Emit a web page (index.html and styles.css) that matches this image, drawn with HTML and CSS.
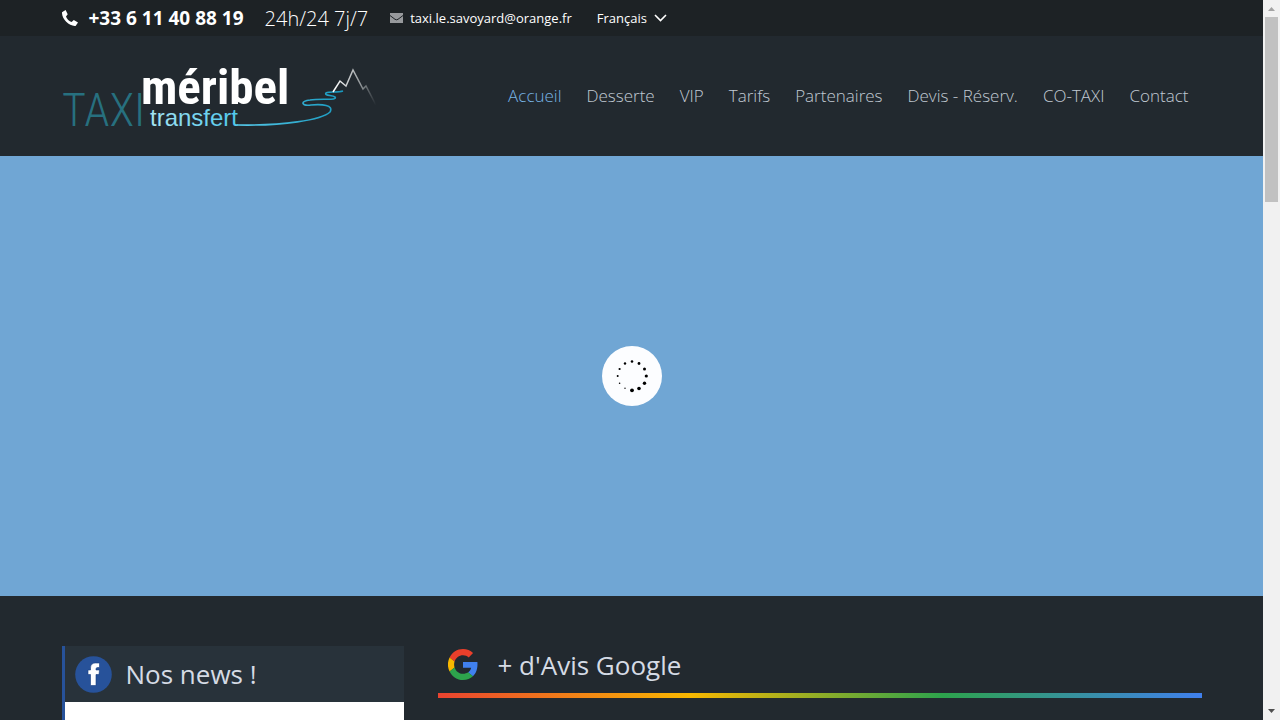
FILE: index.html
```html
<!DOCTYPE html>
<html lang="fr">
  <head>
    <meta charset="UTF-8" />
    <meta name="viewport" content="width=device-width, initial-scale=1.0" />
    <title>Taxi Méribel Transfert</title>
    <link rel="stylesheet" href="styles.css" />
  </head>
  <body>
    <div class="page">
      <div class="topbar">
        <div class="container topbar-inner">
          <a class="phone" href="tel:+33611408819">
            <svg width="16" height="16" viewBox="0 0 16 16" aria-hidden="true">
              <path fill="#fff" d="M3.6 0 0 2.2C-.2 5 1.400 9 4.200 11.800 7 14.600 10.500 16.300 13.600 15.900L16 12.600 11.800 9.900 9.600 12C7.300 11.400 4.700 8.700 4 6.400L5.700 4.300Z" />
            </svg>
            <strong>+33 6 11 40 88 19</strong>
          </a>
          <span class="hours">24h/24 7j/7</span>
          <a class="mail" href="mailto:taxi.le.savoyard@orange.fr">
            <svg width="13" height="10" viewBox="0 0 13 10" aria-hidden="true">
              <path fill="#97999c" d="M0 0H13V10H0Z" />
              <path fill="none" stroke="#1d2225" d="M0 2.500 5 6.300Q6.500 7.300 8 6.300L13 2.500" />
            </svg>
            taxi.le.savoyard@orange.fr
          </a>
          <button class="lang" type="button">
            Français
            <svg width="13" height="8" viewBox="0 0 13 8" aria-hidden="true">
              <path fill="none" stroke="#fff" stroke-width="1.600" d="M1 1 6.500 6.500 12 1" />
            </svg>
          </button>
        </div>
      </div>

      <header class="header">
        <div class="container header-inner">
          <a class="logo" href="#" aria-label="Taxi Méribel Transfert">
            <svg width="316" height="64" viewBox="0 0 316 64">
              <defs>
                <linearGradient id="transfer" x1="0" x2="1">
                  <stop offset="0" stop-color="#a5e4f2" />
                  <stop offset="1" stop-color="#4fc8ec" />
                </linearGradient>
                <linearGradient id="road" gradientUnits="userSpaceOnUse" x1="176" y1="0" x2="285" y2="0">
                  <stop offset="0" stop-color="#56c9ea" />
                  <stop offset="1" stop-color="#1697bd" />
                </linearGradient>
                <linearGradient id="peak" gradientUnits="userSpaceOnUse" x1="271" y1="36" x2="314" y2="40">
                  <stop offset="0" stop-color="#fff" />
                  <stop offset="0.600" stop-color="#92979a" />
                  <stop offset="1" stop-color="#22292f" />
                </linearGradient>
              </defs>
              <text class="logo-taxi" x="0" y="62">TAXI</text>
              <text class="logo-meribel" x="79" y="40">méribel</text>
              <text class="logo-transfert" x="88" y="62" fill="url(#transfer)">transfert</text>
              <path fill="none" stroke="url(#road)" stroke-width="1.600" d="M175 61C220 62 260 56 268 48C272 41 260 40 249 41C239 42 238 37 248 36C260 34 276 37 273 33C270 31 262 32 264 29C268 27 275 29 281 27" />
              <path fill="none" stroke="url(#peak)" stroke-width="1.500" d="M271 28 278 17 284 22 291 6 301 25 304 22 314 41" />
            </svg>
          </a>
          <nav class="menu">
            <a class="active" href="#">Accueil</a>
            <a href="#">Desserte</a>
            <a href="#">VIP</a>
            <a href="#">Tarifs</a>
            <a href="#">Partenaires</a>
            <a href="#">Devis - Réserv.</a>
            <a href="#">CO-TAXI</a>
            <a href="#">Contact</a>
          </nav>
        </div>
      </header>

      <section class="hero">
        <div class="loader">
          <svg width="60" height="60" viewBox="0 0 60 60" aria-hidden="true">
            <circle cx="30" cy="15.500" r="1.300" />
            <circle cx="37" cy="17.500" r="1.400" />
            <circle cx="42.500" cy="23" r="1.500" />
            <circle cx="44.300" cy="30" r="1.600" />
            <circle cx="42.500" cy="37.200" r="1.700" />
            <circle cx="37" cy="42.500" r="1.800" />
            <circle cx="30" cy="44.300" r="1.900" />
            <circle cx="23" cy="42.300" r="0.700" />
            <circle cx="17.600" cy="37.200" r="0.800" />
            <circle cx="15.700" cy="30" r="1" />
            <circle cx="17.600" cy="23" r="1.100" />
            <circle cx="23" cy="17.500" r="1.200" />
          </svg>
        </div>
      </section>

      <main class="container columns">
        <aside class="news">
          <h2 class="news-title">
            <svg width="37" height="37" viewBox="0 0 37 37" aria-hidden="true">
              <circle cx="18.500" cy="18.500" r="18.300" fill="#27529a" />
              <path fill="#fff" stroke="#153d80" stroke-width="0.600" d="M15.500 29.500V18.500H13V14H15.500V12C15.500 8.500 17.500 7 20.500 7H24.500V11.500H22.500Q21 11.500 21 13V14H24.500L24 18.500H21V29.500Z" />
            </svg>
            Nos news !
          </h2>
          <div class="news-body"></div>
        </aside>
        <section class="reviews">
          <h2 class="reviews-title">
            <svg width="30" height="31" viewBox="0 0 48 48" preserveAspectRatio="none" aria-hidden="true">
              <path fill="#ea3f2b" d="M24 9.500c3.540 0 6.710 1.220 9.210 3.600l6.850-6.850C35.900 2.380 30.470 0 24 0 14.620 0 6.510 5.380 2.560 13.220l7.980 6.190C12.430 13.720 17.740 9.500 24 9.500z" />
              <path fill="#4080ee" d="M47 20H24v9.020h12.940c-.580 2.960-2.260 5.480-4.780 7.180l7.730 6C45 37.500 48 30 47 20z" />
              <path fill="#f8b700" d="M10.530 28.590A14.500 14.500 0 0 1 10.530 19.410L2.560 13.220A24 24 0 0 0 2.560 34.780z" />
              <path fill="#2da34c" d="M24 48c6.480 0 11.930-2.130 15.890-5.810l-7.730-6c-2.150 1.450-4.920 2.300-8.160 2.300-6.260 0-11.570-4.220-13.470-9.910l-7.980 6.190C6.510 42.620 14.620 48 24 48z" />
            </svg>
            + d'Avis Google
          </h2>
        </section>
      </main>
    </div>

    <div class="scrollbar" aria-hidden="true">
      <svg width="17" height="17" viewBox="0 0 17 17"><path fill="#a3a3a3" d="M5 11 8.500 7 12 11Z" /></svg>
      <div class="scroll-track"><div class="scroll-thumb"></div></div>
      <svg width="17" height="17" viewBox="0 0 17 17"><path fill="#505050" d="M5 6 8.500 10 12 6Z" /></svg>
    </div>
  </body>
</html>
```

FILE: styles.css
```css
* {
  box-sizing: border-box;
}

body {
  margin: 0;
  background: #22292f;
  color: #d5dbe5;
  font-family: "Open Sans", "Noto Sans", sans-serif;
}

a {
  color: inherit;
  text-decoration: none;
}

svg {
  display: block;
  flex-shrink: 0;
}

.page {
  display: flex;
  flex-direction: column;
  min-height: 100vh;
  margin-right: 17px;
}

.container {
  width: 100%;
  max-width: 1140px;
  margin: 0 auto;
}

/* top bar */
.topbar {
  background: #1d2225;
  color: #fff;
}

.topbar-inner {
  display: flex;
  align-items: center;
  height: 36px;
  font-size: 13px;
}

.phone {
  display: flex;
  align-items: center;
  gap: 11px;
  font-size: 19px;
}

.hours {
  margin-left: 21px;
  font-size: 20px;
  font-weight: 300;
}

.mail {
  display: flex;
  align-items: center;
  gap: 7px;
  margin-left: 22px;
}

.lang {
  display: flex;
  align-items: center;
  gap: 7px;
  margin-left: 25px;
  padding: 0;
  border: 0;
  background: none;
  color: inherit;
  font: inherit;
}

/* header */
.header-inner {
  display: flex;
  align-items: center;
  justify-content: space-between;
  height: 120px;
}

.logo svg {
  overflow: visible;
}

.logo-taxi {
  fill: #27707f;
  font: 300 46px "Roboto Condensed", Roboto, sans-serif;
}

.logo-meribel {
  fill: #fff;
  font: bold 49px "Roboto Condensed", "Open Sans Condensed", sans-serif;
}

.logo-transfert {
  font: 24px "Liberation Sans", sans-serif;
}

.menu {
  display: flex;
  gap: 25px;
  padding: 0 13px 2px 0;
  font-size: 17px;
  font-weight: 300;
  color: #c1c9d3;
}

.menu a {
  white-space: nowrap;
}

.menu .active {
  color: #78b4e6;
}

/* slider */
.hero {
  display: grid;
  place-items: center;
  height: 440px;
  background: #70a6d4;
}

.loader {
  border-radius: 50%;
  background: #fcfdff;
}

/* content */
.columns {
  display: grid;
  flex: 1;
  grid-template-columns: 342px 1fr;
  gap: 34px;
  padding-top: 50px;
}

h2 {
  display: flex;
  align-items: center;
  margin: 0;
  font-size: 26px;
  font-weight: 400;
}

.news {
  display: flex;
  flex-direction: column;
  border-left: 3px solid #27529a;
}

.news-title {
  gap: 14px;
  height: 56px;
  padding-left: 10px;
  background: #28323a;
}

.news-body {
  flex: 1;
  background: #fff;
}

.reviews-title {
  gap: 20px;
  height: 47px;
  padding: 0 10px 10px;
}

.reviews::after {
  content: "";
  display: block;
  height: 5px;
  background: linear-gradient(to right, #ea4330, #f8b700 33%, #2da34c 66%, #4080ee);
}

/* scroll bar */
.scrollbar {
  position: fixed;
  top: 0;
  right: 0;
  bottom: 0;
  display: flex;
  flex-direction: column;
  width: 17px;
  background: #f1f1f1;
}

.scroll-track {
  flex: 1;
  padding: 0 2px;
}

.scroll-thumb {
  height: 27%;
  background: #c1c1c1;
}
```
